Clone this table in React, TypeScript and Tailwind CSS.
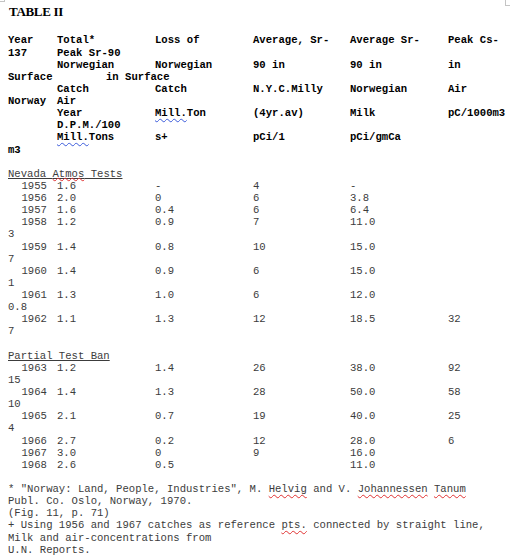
import React from 'react';

type Cell = React.ReactNode;

const COLS = [
  'w-[49px] shrink-0',
  'w-[98px] shrink-0',
  'w-[98px] shrink-0',
  'w-[97px] shrink-0',
  'w-[98px] shrink-0',
  'flex-1',
];

const Spell: React.FC<{ children: React.ReactNode; blue?: boolean; tight?: boolean }> = ({
  children,
  blue,
  tight,
}) => (
  <span
    className={`underline decoration-wavy decoration-1 ${tight ? 'underline-offset-[0px]' : 'underline-offset-2'} ${
      blue ? 'decoration-[#3b5bdb]' : 'decoration-[#e03131]'
    }`}
  >
    {children}
  </span>
);

const headerRows: Cell[][] = [
  ['Year', 'Total*', 'Loss of', 'Average, Sr-', 'Average Sr-', 'Peak Cs-'],
  ['137', 'Peak Sr-90'],
  ['', 'Norwegian', 'Norwegian', '90 in', '90 in', 'in'],
  ['Surface', <span className="pl-[49px]">in Surface</span>],
  ['', 'Catch', 'Catch', 'N.Y.C.Milly', 'Norwegian', 'Air'],
  ['Norway', 'Air'],
  ['', 'Year', <><Spell blue>Mill.</Spell>Ton</>, '(4yr.av)', 'Milk', 'pC/1000m3'],
  ['', 'D.P.M./100'],
  ['', <><Spell blue>Mill.</Spell>Tons</>, 's+', 'pCi/1', 'pCi/gmCa'],
  ['m3'],
];

// year, total, loss, nyc, norway milk, air  | or a single carry-over value
const nevada: (string[] | string)[] = [
  ['1955', '1.6', '-', '4', '-'],
  ['1956', '2.0', '0', '6', '3.8'],
  ['1957', '1.6', '0.4', '6', '6.4'],
  ['1958', '1.2', '0.9', '7', '11.0'],
  '3',
  ['1959', '1.4', '0.8', '10', '15.0'],
  '7',
  ['1960', '1.4', '0.9', '6', '15.0'],
  '1',
  ['1961', '1.3', '1.0', '6', '12.0'],
  '0.8',
  ['1962', '1.1', '1.3', '12', '18.5', '32'],
  '7',
];

const partial: (string[] | string)[] = [
  ['1963', '1.2', '1.4', '26', '38.0', '92'],
  '15',
  ['1964', '1.4', '1.3', '28', '50.0', '58'],
  '10',
  ['1965', '2.1', '0.7', '19', '40.0', '25'],
  '4',
  ['1966', '2.7', '0.2', '12', '28.0', '6'],
  ['1967', '3.0', '0', '9', '16.0'],
  ['1968', '2.6', '0.5', '', '11.0'],
];

const Line: React.FC<{ cells: Cell[]; bold?: boolean }> = ({ cells, bold }) => (
  <div className={`flex h-[12.13px] whitespace-nowrap ${bold ? 'font-bold text-black' : ''}`}>
    {cells.map((c, i) => (
      <div key={i} className={COLS[i]}>
        {c}
      </div>
    ))}
  </div>
);

const Blank = () => <div className="h-[12.13px]" />;

const DataBlock: React.FC<{ rows: (string[] | string)[] }> = ({ rows }) => (
  <>
    {rows.map((r, i) =>
      typeof r === 'string' ? (
        <div key={i} className="h-[12.13px]">{r}</div>
      ) : (
        <Line key={i} cells={[<span className="pl-[13.5px]">{r[0]}</span>, ...r.slice(1)]} />
      )
    )}
  </>
);

export default function App() {
  return (
    <div className="relative w-[510px] h-[560px] bg-white overflow-hidden">
      {/* page corner marks */}
      <div className="absolute left-0 top-0 w-[5px] h-[2px] border-r border-b border-[#c4c4c4]" />
      <div className="absolute right-0 top-0 w-[5px] h-[6px] border-l border-b border-[#c4c4c4]" />

      <div className="pl-[9px] pt-[4.4px]">
        <h1 className="font-['Liberation_Serif',serif] font-bold text-[13px] leading-[15px] tracking-[-0.3px] text-black">
          TABLE II
        </h1>
      </div>

      <div className="pl-[8px] mt-[15px] font-['Liberation_Mono',monospace] text-[10.6px] leading-[12.13px] text-[#3c3c3c]">
        {headerRows.map((r, i) => (
          <Line key={i} cells={r} bold />
        ))}
        <Blank />
        <div className="h-[12.13px]">
          <span className="underline underline-offset-[1px]">
            Nevada <Spell tight>Atmos</Spell> Tests
          </span>
        </div>
        <DataBlock rows={nevada} />
        <Blank />
        <div className="h-[12.13px]">
          <span className="underline underline-offset-[1px]">Partial Test Ban</span>
        </div>
        <DataBlock rows={partial} />
        <Blank />
        <div className="whitespace-nowrap">
          <div>
            * "Norway: Land, People, Industries", M. <Spell>Helvig</Spell> and V.{' '}
            <Spell>Johannessen</Spell> <Spell>Tanum</Spell>
          </div>
          <div>Publ. Co. Oslo, Norway, 1970.</div>
          <div>(Fig. 11, p. 71)</div>
          <div>
            + Using 1956 and 1967 catches as reference <Spell>pts.</Spell> connected by straight line,
          </div>
          <div>Milk and air-concentrations from</div>
          <div>U.N. Reports.</div>
        </div>
      </div>
    </div>
  );
}
